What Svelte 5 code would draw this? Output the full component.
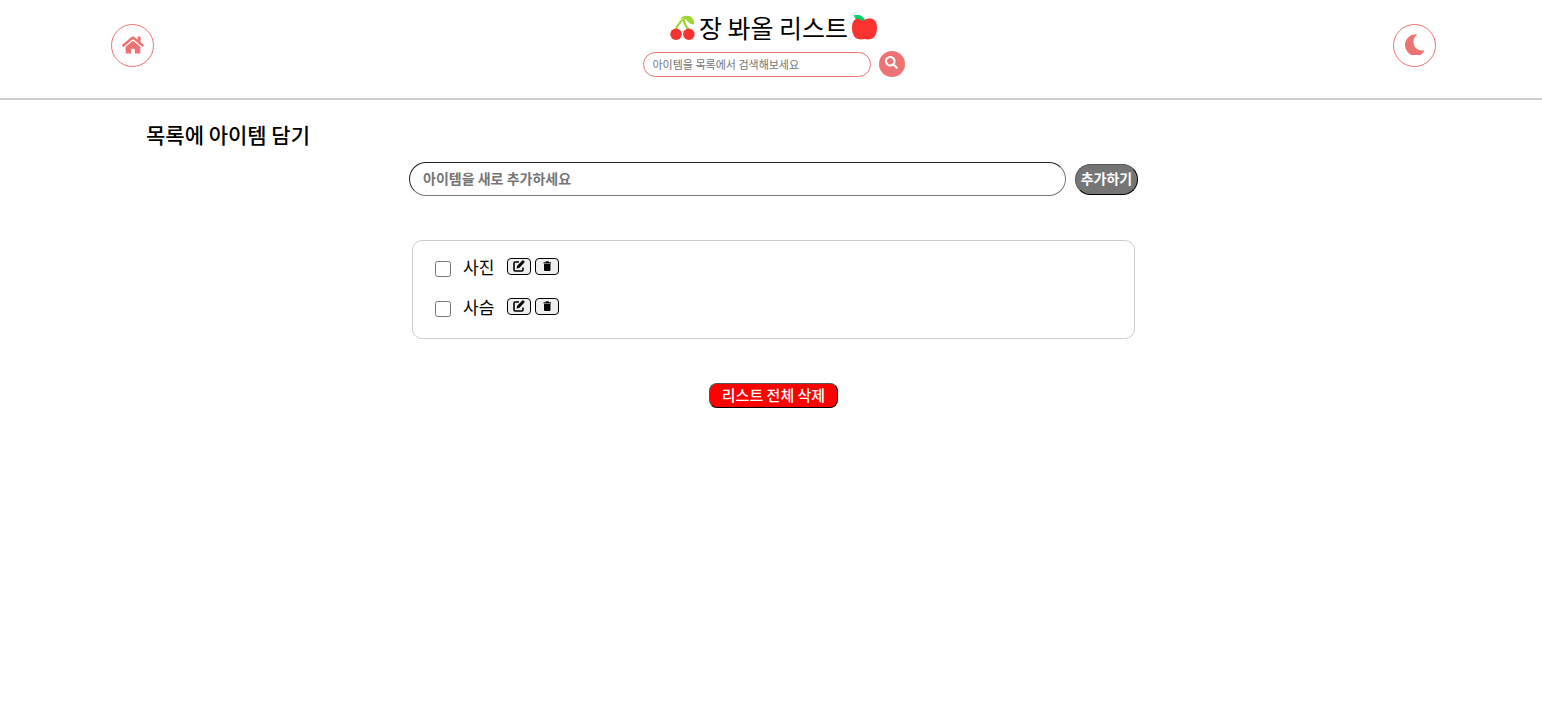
<script lang="ts">
  type Item = { id: number; name: string; done: boolean };

  let items: Item[] = $state([
    { id: 1, name: "사진", done: false },
    { id: 2, name: "사슴", done: false },
  ]);
  let newItem = $state("");
  let keyword = $state("");
  let query = $state("");
  let dark = $state(false);

  let visibleItems = $derived(items.filter((item) => item.name.includes(query)));

  function search(event: SubmitEvent) {
    event.preventDefault();
    query = keyword.trim();
  }

  function addItem(event: SubmitEvent) {
    event.preventDefault();
    const name = newItem.trim();
    if (!name) return;
    items.push({ id: Date.now(), name, done: false });
    newItem = "";
  }

  function editItem(item: Item) {
    const name = window.prompt("아이템 수정", item.name);
    if (name) item.name = name;
  }

  function removeItem(id: number) {
    items = items.filter((item) => item.id !== id);
  }
</script>

<div class="page" class:dark>
  <header>
    <a class="round" href="/" aria-label="홈">
      <svg class="home" viewBox="0 0 576 512">
        <path d="M280.37 148.26L96 300.11V464a16 16 0 0 0 16 16l112.06-.29a16 16 0 0 0 15.92-16V368a16 16 0 0 1 16-16h64a16 16 0 0 1 16 16v95.64a16 16 0 0 0 16 16.05L464 480a16 16 0 0 0 16-16V300L295.67 148.26a12.19 12.19 0 0 0-15.3 0zM571.6 251.47L488 182.56V44.05a12 12 0 0 0-12-12h-56a12 12 0 0 0-12 12v72.61L318.47 43a48 48 0 0 0-61 0L4.34 251.47a12 12 0 0 0-1.6 16.9l25.5 31A12 12 0 0 0 45.15 301l235.22-193.74a12.19 12.19 0 0 1 15.3 0L530.9 301a12 12 0 0 0 16.9-1.6l25.5-31a12 12 0 0 0-1.7-16.93z" />
      </svg>
    </a>

    <div class="center">
      <h1>
        <svg class="fruit" viewBox="0 0 26 26">
          <path d="M6 15C8 10 11 6 16 3M14 5C15 9 17 13 20 16" fill="none" stroke="#9bd82e" stroke-width="2.2" />
          <path d="M10 4C14 0 21 0 23 3c2 2 2 4 2 7-5 0-7-4-9-6-2-1-4-1-6 0z" fill="#9bd82e" />
          <circle cx="6.3" cy="20" r="6" fill="#fa3230" />
          <circle cx="19.6" cy="20" r="6" fill="#fa3230" />
        </svg>
        <span>장 봐올 리스트</span>
        <svg class="fruit" viewBox="0 0 26 26">
          <path d="M2 0c6-1 10 1 11 6C7 7 3 5 2 0z" fill="#00d26a" />
          <path d="M13 5c2-1 5-2 8-1 3 1 5 4 5 9 0 7-3 12-7 12-2 1-4 0-6 0-2 0-4 1-6 0-4 0-7-5-7-12 0-5 2-8 5-9 3-1 6 0 8 1z" fill="#fa3230" />
          <path d="M4 0c5 0 8 2 9 6C9 6 5 4 4 0z" fill="#00d26a" />
        </svg>
      </h1>
      <form class="search" onsubmit={search}>
        <input type="text" bind:value={keyword} placeholder="아이템을 목록에서 검색해보세요" aria-label="아이템 검색" />
        <button type="submit" aria-label="검색">
          <svg viewBox="0 0 512 512">
            <path d="M505 442.7L405.3 343c-4.5-4.5-10.6-7-17-7H372c27.6-35.3 44-79.7 44-128C416 93.1 322.9 0 208 0S0 93.1 0 208s93.1 208 208 208c48.3 0 92.7-16.4 128-44v16.3c0 6.4 2.5 12.5 7 17l99.7 99.7c9.4 9.4 24.6 9.4 33.9 0l28.3-28.3c9.4-9.4 9.4-24.6.1-34zM208 336c-70.7 0-128-57.2-128-128 0-70.7 57.2-128 128-128 70.7 0 128 57.2 128 128 0 70.7-57.2 128-128 128z" />
          </svg>
        </button>
      </form>
    </div>

    <button class="round" type="button" aria-label="다크 모드" onclick={() => (dark = !dark)}>
      <svg class="moon" viewBox="0 0 20 21">
        <path d="M11.5.2c.6 0 .7.4.3.8C9.600 2.600 8.500 5 8.500 7.800c0 5.500 4.500 9.400 10 8.600.7-.1 1 .2.7.7-.8 1.500-2.100 2.900-3.700 3.900H6.500C2.700 19 0 15.300 0 11 0 5 5 .1 11.500.2z" />
      </svg>
    </button>
  </header>

  <main>
    <h2>목록에 아이템 담기</h2>

    <form class="add" onsubmit={addItem}>
      <input type="text" bind:value={newItem} placeholder="아이템을 새로 추가하세요" aria-label="새 아이템" />
      <button type="submit">추가하기</button>
    </form>

    <ul>
      {#each visibleItems as item (item.id)}
        <li>
          <input id="item-{item.id}" type="checkbox" bind:checked={item.done} />
          <label for="item-{item.id}">{item.name}</label>
          <div class="tools">
            <button type="button" aria-label="수정" onclick={() => editItem(item)}>
              <svg viewBox="0 0 12 12">
                <path d="M6 2H2.200Q1 2 1 3.200V9.800Q1 11 2.200 11H8.800Q10 11 10 9.800V7.500" fill="none" stroke="#000" stroke-width="1.6" />
                <path d="M9.400.6q.6-.6 1.200 0l.8.8q.6.6 0 1.200L6.200 7.900l-2.600.6.6-2.700z" />
              </svg>
            </button>
            <button type="button" aria-label="삭제" onclick={() => removeItem(item.id)}>
              <svg viewBox="0 0 12 12">
                <path d="M2.500 2.200h2l.5-.9h2.500l.5.9h2v1.200h-7.500zM3 4h6.500v6q0 1-1 1H4q-1 0-1-1z" />
              </svg>
            </button>
          </div>
        </li>
      {/each}
    </ul>

    <button class="clear" type="button" onclick={() => (items = [])}>리스트 전체 삭제</button>
  </main>
</div>

<style>
  :global(body) {
    margin: 0;
    background: #fff;
  }

  .page {
    min-height: 100vh;
    color: #000;
    font-family: "Noto Sans CJK KR", sans-serif;
  }

  .page.dark {
    background: #222;
    color: #fff;
  }

  * {
    box-sizing: border-box;
  }

  button,
  input {
    margin: 0;
    font-family: inherit;
  }

  button {
    padding: 0;
    cursor: pointer;
  }

  header {
    display: flex;
    align-items: center;
    justify-content: space-between;
    padding: 10px 106px 17px 111px;
    border-bottom: 2px solid #ccc;
  }

  .round {
    display: flex;
    align-items: center;
    justify-content: center;
    width: 43px;
    height: 43px;
    padding-bottom: 2px;
    border: 1px solid #ed7272;
    border-radius: 50%;
    background: none;
  }

  .round svg {
    fill: #ed7272;
  }

  .home {
    width: 22px;
    height: 20px;
  }

  .moon {
    width: 20px;
    height: 21px;
  }

  .center {
    display: flex;
    flex-direction: column;
    align-items: center;
    gap: 7px;
    padding-bottom: 4px;
  }

  h1 {
    display: flex;
    align-items: center;
    gap: 4px;
    margin: 0;
    font-size: 25px;
    font-weight: 400;
    line-height: 34px;
  }

  .fruit {
    width: 25px;
    height: 25px;
  }

  .search {
    display: flex;
    align-items: flex-end;
    gap: 8px;
  }

  .search input {
    width: 228px;
    height: 25px;
    padding: 0 9px 1px;
    border: 1px solid #ed7272;
    border-radius: 13px;
    font-size: 11px;
  }

  .search button {
    display: flex;
    justify-content: center;
    width: 26px;
    height: 26px;
    padding-top: 5px;
    border: 0;
    border-radius: 50%;
    background: #ed7272;
  }

  .search svg {
    width: 13px;
    height: 13px;
    fill: #fff;
  }

  input::placeholder {
    color: #757575;
  }

  main {
    display: flex;
    flex-direction: column;
    align-items: center;
    padding: 20px 0 20px 5px;
  }

  h2 {
    align-self: stretch;
    margin: 0 141px 14px;
    font-size: 21px;
    font-weight: 500;
    line-height: 28px;
  }

  .add {
    display: flex;
    align-items: center;
    gap: 9px;
    width: 100%;
    max-width: 729px;
  }

  .add input {
    flex: 1;
    min-width: 0;
    height: 34px;
    padding: 0 13px 2px;
    border: 1px solid #757575;
    border-top-color: #222;
    border-left-color: #222;
    border-radius: 17px;
    font-size: 14px;
    font-weight: 700;
  }

  .add button {
    width: 63px;
    height: 31px;
    padding-bottom: 2px;
    border: 1px solid #000;
    border-top-color: #555;
    border-left-color: #555;
    border-radius: 16px;
    background: #757575;
    color: #fff;
    font-size: 14px;
    font-weight: 700;
  }

  ul {
    width: 100%;
    max-width: 723px;
    margin: 44px 0;
    padding: 6px 22px 11px;
    border: 1px solid #ccc;
    border-radius: 10px;
    list-style: none;
  }

  li {
    display: flex;
    align-items: center;
    height: 40px;
  }

  li input {
    width: 16px;
    height: 16px;
    margin: 4px 12px 0 0;
  }

  label {
    font-size: 17px;
    line-height: 24px;
  }

  .tools {
    display: flex;
    gap: 4px;
    margin-left: 13px;
    padding-bottom: 2px;
  }

  .tools button {
    display: flex;
    align-items: center;
    justify-content: center;
    width: 24px;
    height: 17px;
    border: 1px solid #000;
    border-radius: 4px;
    background: #efefef;
  }

  .tools svg {
    width: 12px;
    height: 12px;
  }

  .clear {
    width: 129px;
    height: 25px;
    padding-bottom: 2px;
    border: 1px solid #000;
    border-top-color: #555;
    border-left-color: #555;
    border-radius: 8px;
    background: #f00;
    color: #fff;
    font-size: 15px;
    font-weight: 500;
    line-height: 21px;
  }
</style>
